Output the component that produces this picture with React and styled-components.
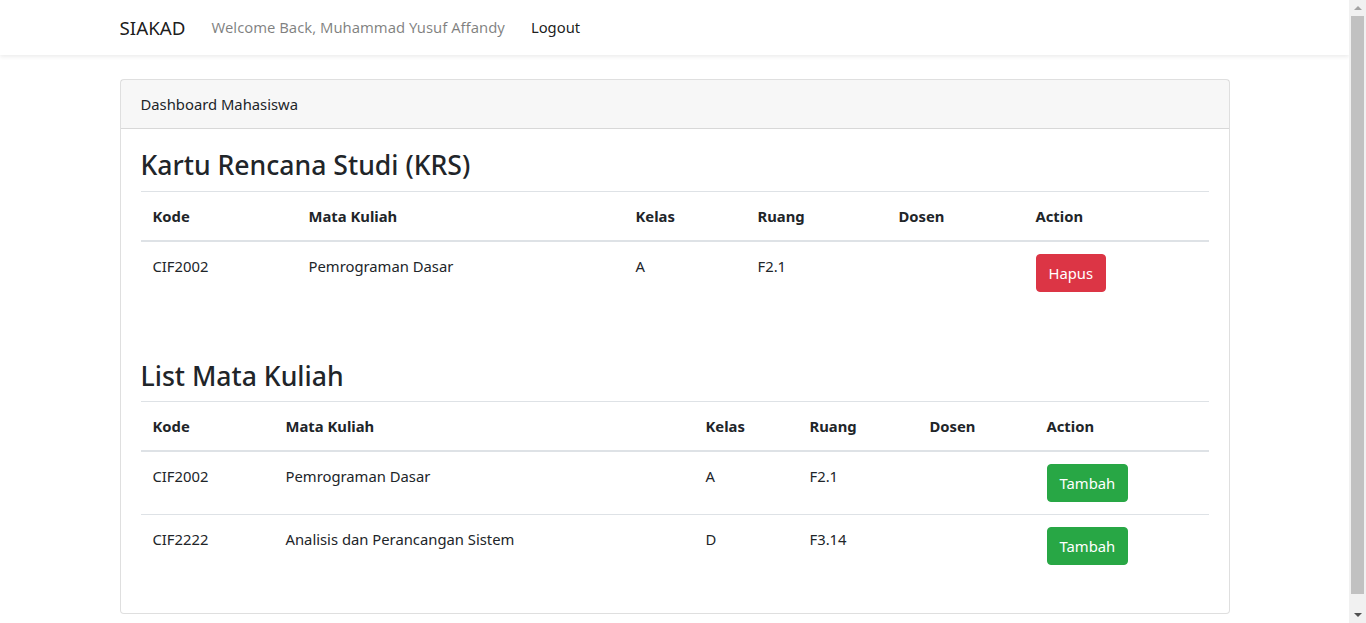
import React from "react";
import styled, { createGlobalStyle } from "styled-components";

const GlobalStyle = createGlobalStyle`
  *, *::before, *::after { box-sizing: border-box; }
  html, body { margin: 0; padding: 0; }
  body {
    font-family: "Noto Sans", "Open Sans", sans-serif;
    font-size: 14.8px;
    line-height: 24px;
    color: #212529;
    background: #fff;
    padding-right: 17px;
  }
`;

const Navbar = styled.nav`
  background: #fff;
  box-shadow: 0 2px 4px rgba(0, 0, 0, 0.075);
  padding: 8px 0 7px;
`;

const Container = styled.div`
  max-width: 1140px;
  margin: 0 auto;
  padding: 0 15px;
  display: ${(p) => (p.$flex ? "flex" : "block")};
  align-items: center;
`;

const Brand = styled.a`
  font-size: 18.8px;
  line-height: 30px;
  padding: 4px 0;
  margin-right: 17px;
  color: rgba(0, 0, 0, 0.9);
`;

const NavLink = styled.a`
  padding: 7px 8px 9px;
  margin-left: ${(p) => (p.$dim ? "1px" : "10px")};
  color: ${(p) => (p.$dim ? "rgba(0, 0, 0, 0.5)" : "rgba(0, 0, 0, 0.9)")};
`;

const Main = styled.main`
  padding: 24px 0;
`;

const Card = styled.div`
  border: 1px solid rgba(0, 0, 0, 0.125);
  border-radius: 4px;
  background: #fff;
`;

const CardHeader = styled.div`
  padding: 12px 20px;
  background: rgba(0, 0, 0, 0.03);
  border-bottom: 1px solid rgba(0, 0, 0, 0.125);
`;

const CardBody = styled.div`
  padding: 20px;
`;

const Heading = styled.h3`
  font-size: 26.6px;
  font-weight: 500;
  line-height: 33.6px;
  margin: ${(p) => (p.$spaced ? "56px" : "0")} 0 8px;
`;

const Table = styled.table`
  width: 100%;
  border-collapse: collapse;
  margin-bottom: 16px;
`;

const Col = styled.col`
  width: ${(p) => p.$w}px;
`;

const Th = styled.th`
  text-align: left;
  font-weight: 700;
  padding: 12px;
  border-top: 1px solid #dee2e6;
  border-bottom: 2px solid #dee2e6;
  vertical-align: bottom;
`;

const Td = styled.td`
  padding: 12px;
  border-top: 1px solid #dee2e6;
  vertical-align: top;
`;

const Button = styled.button`
  font-family: inherit;
  font-size: 14.8px;
  line-height: 24px;
  padding: 6px 12px;
  border: 1px solid ${(p) => p.$bg};
  border-radius: 4px;
  background: ${(p) => p.$bg};
  color: #fff;
`;

/* window scrollbar as it appears in the screenshot */
const Scrollbar = styled.div`
  position: fixed;
  top: 0;
  right: 0;
  width: 17px;
  height: 100vh;
  background: #f1f1f1;
  display: flex;
  flex-direction: column;
`;

const ScrollArrow = styled.div`
  height: 16px;
  display: flex;
  align-items: center;
  justify-content: center;
`;

const Thumb = styled.div`
  height: 578px;
  margin: 0 2px;
  background: #c1c1c1;
`;

const ScrollTrack = styled.div`
  flex: 1;
`;

const heads = ["Kode", "Mata Kuliah", "Kelas", "Ruang", "Dosen", "Action"];

const krs = [{ kode: "CIF2002", nama: "Pemrograman Dasar", kelas: "A", ruang: "F2.1" }];

const matkul = [
  { kode: "CIF2002", nama: "Pemrograman Dasar", kelas: "A", ruang: "F2.1" },
  { kode: "CIF2222", nama: "Analisis dan Perancangan Sistem", kelas: "D", ruang: "F3.14" },
];

function CourseTable({ widths, rows, label, color }) {
  return (
    <Table>
      <colgroup>
        {widths.map((w, i) => (
          <Col key={i} $w={w} />
        ))}
      </colgroup>
      <thead>
        <tr>
          {heads.map((h) => (
            <Th key={h}>{h}</Th>
          ))}
        </tr>
      </thead>
      <tbody>
        {rows.map((r) => (
          <tr key={r.kode}>
            <Td>{r.kode}</Td>
            <Td>{r.nama}</Td>
            <Td>{r.kelas}</Td>
            <Td>{r.ruang}</Td>
            <Td></Td>
            <Td>
              <Button $bg={color}>{label}</Button>
            </Td>
          </tr>
        ))}
      </tbody>
    </Table>
  );
}

export default function App() {
  return (
    <>
      <GlobalStyle />
      <Navbar>
        <Container $flex>
          <Brand>SIAKAD</Brand>
          <NavLink $dim>Welcome Back, Muhammad Yusuf Affandy</NavLink>
          <NavLink>Logout</NavLink>
        </Container>
      </Navbar>
      <Main>
        <Container>
          <Card>
            <CardHeader>Dashboard Mahasiswa</CardHeader>
            <CardBody>
              <Heading>Kartu Rencana Studi (KRS)</Heading>
              <CourseTable
                widths={[156, 327, 122, 141, 137, 185]}
                rows={krs}
                label="Hapus"
                color="#dc3545"
              />
              <Heading $spaced>List Mata Kuliah</Heading>
              <CourseTable
                widths={[133, 420, 104, 120, 117, 174]}
                rows={matkul}
                label="Tambah"
                color="#28a745"
              />
            </CardBody>
          </Card>
        </Container>
      </Main>
      <Scrollbar>
        <ScrollArrow>
          <svg width="8" height="4" viewBox="0 0 8 4">
            <path d="M0 4 L4 0 L8 4 Z" fill="#a3a3a3" />
          </svg>
        </ScrollArrow>
        <Thumb />
        <ScrollTrack />
        <ScrollArrow>
          <svg width="8" height="4" viewBox="0 0 8 4">
            <path d="M0 0 L8 0 L4 4 Z" fill="#505050" />
          </svg>
        </ScrollArrow>
      </Scrollbar>
    </>
  );
}
